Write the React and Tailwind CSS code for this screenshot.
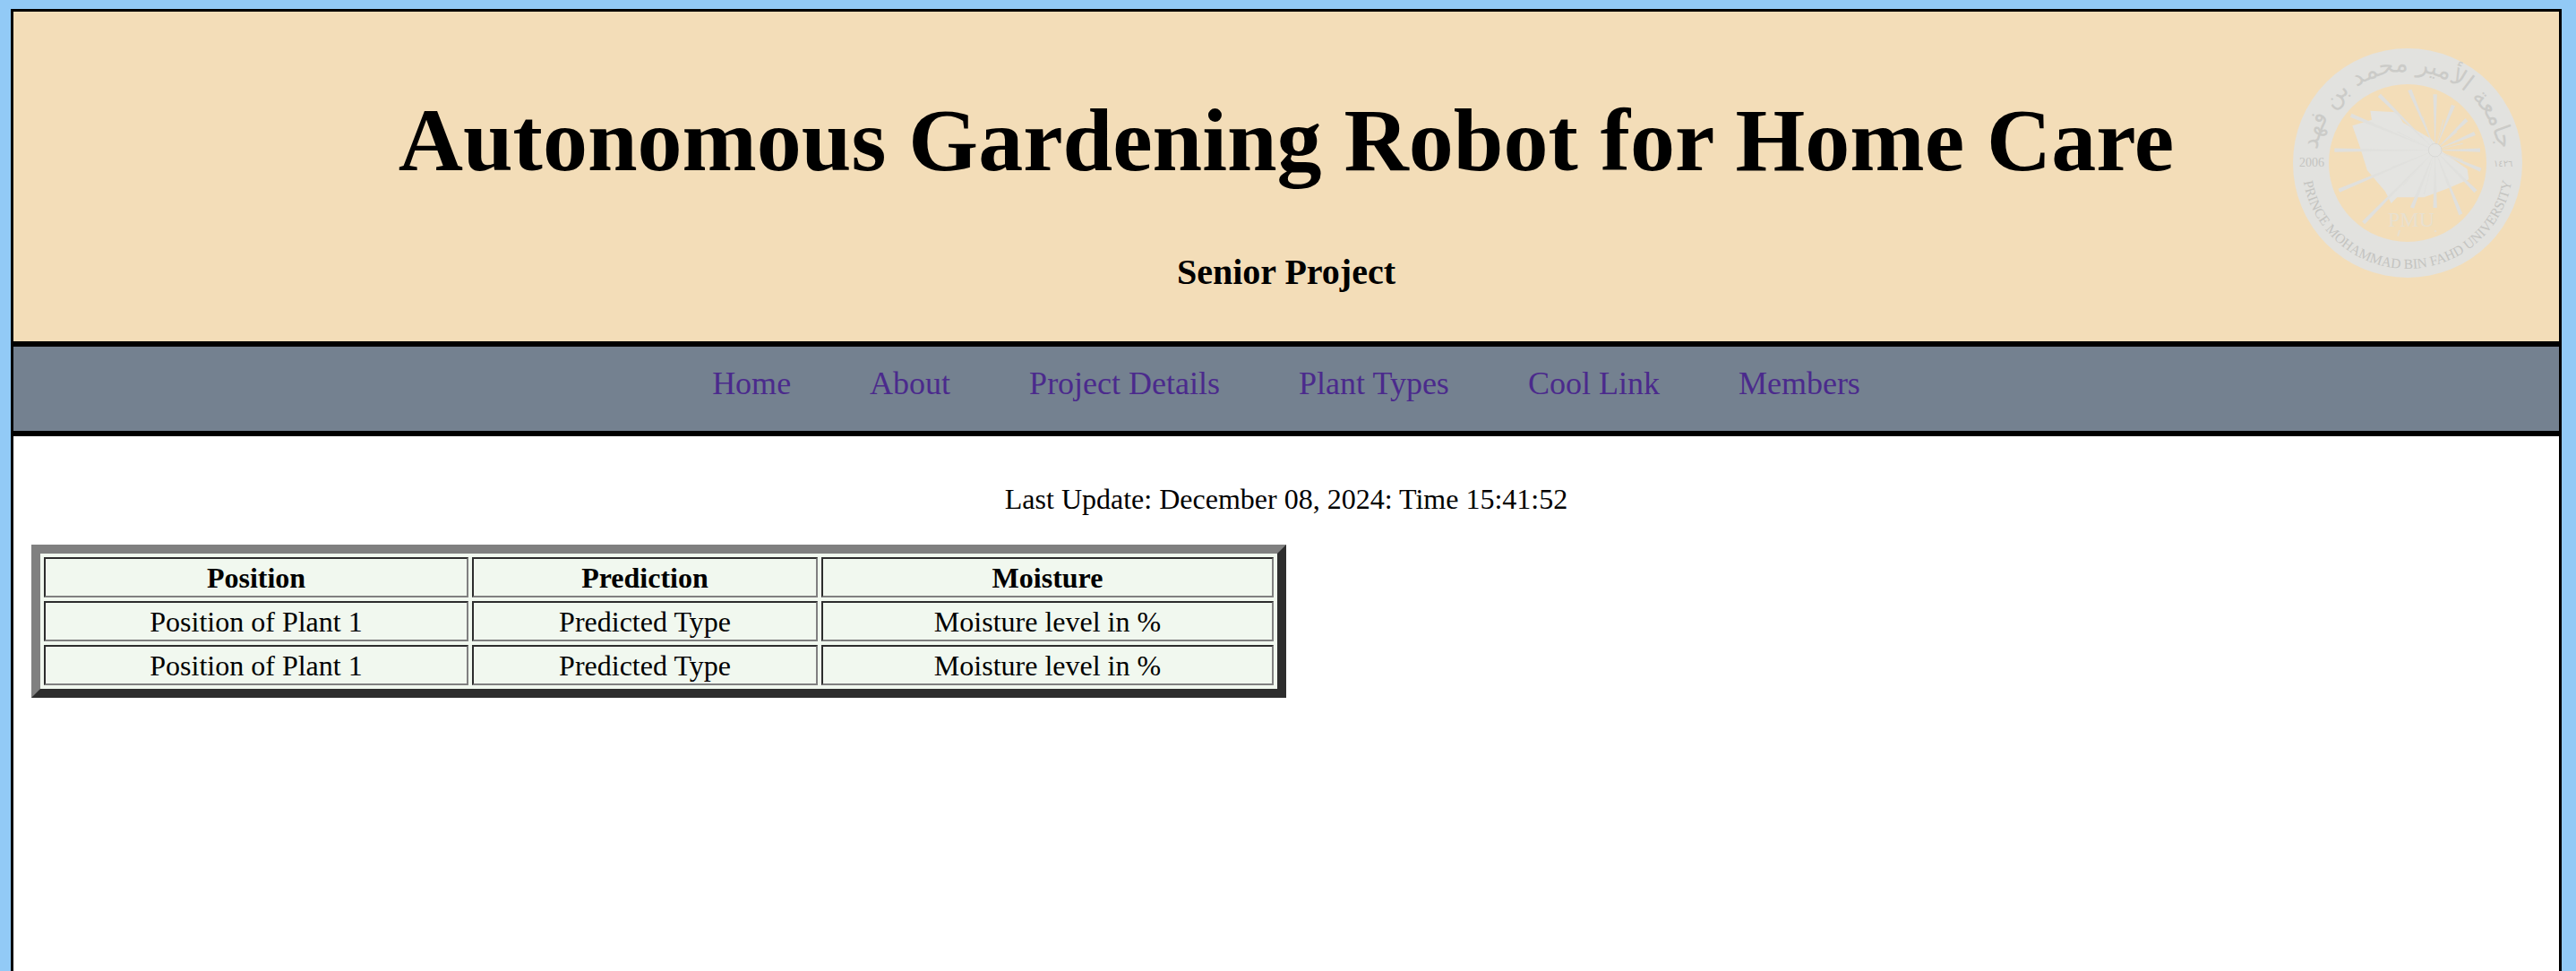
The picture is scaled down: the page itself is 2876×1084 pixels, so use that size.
const serif = "font-['Liberation_Serif','Times_New_Roman',serif]";

const SUN = [597, 412];
const RAY_ENDS = [
  [410, 228], [512, 210], [597, 225], [658, 262], [703, 310], [730, 356], [748, 412], [750, 478],
  [733, 550], [683, 627], [597, 605], [520, 605], [357, 655], [275, 547], [260, 412], [315, 295],
];
const FINE_RAYS = [
  [555, 300], [625, 310], [670, 350], [690, 390], [690, 445], [670, 490], [640, 530], [560, 560],
  [490, 530], [450, 470], [450, 412], [470, 350],
];

function taper([x, y], w) {
  const dx = x - SUN[0];
  const dy = y - SUN[1];
  const len = Math.hypot(dx, dy);
  const nx = (-dy / len) * (w / 2);
  const ny = (dx / len) * (w / 2);
  return `${SUN[0]},${SUN[1]} ${x + nx},${y + ny} ${x - nx},${y - ny}`;
}

function Logo() {
  const ring = "#e2e2df";
  const ray = "#e0e0dd";
  return (
    <svg width="260" height="260" viewBox="-130 -130 260 260" className="absolute left-[2558px] top-[52px]" aria-label="Prince Mohammad Bin Fahd University seal">
      <defs>
        <path id="topArc" d="M -101 14 A 102 102 0 1 1 101 14" />
        <path id="bottomArc" d="M -118 0 A 118 118 0 0 0 118 0" />
      </defs>
      <circle r="128" fill={ring} />
      <circle r="88" fill="#f3ddb8" />
      <g transform="scale(0.3333) translate(-505 -455)">
        <polygon points="380,280 470,285 490,320 585,375 625,420 705,475 710,510 640,540 560,570 470,570 450,590 430,550 370,480 345,400 320,330 385,310" fill="#e4e4e1" />
        {RAY_ENDS.map((p, i) => <polygon key={i} points={taper(p, 13)} fill={ray} />)}
        {FINE_RAYS.map((p, i) => <polygon key={i} points={taper(p, 3)} fill={ray} />)}
        <circle cx={SUN[0]} cy={SUN[1]} r="22" fill="#e4e4e1" stroke="#d2d2cf" strokeWidth="2" />
        <text x="517" y="668" textAnchor="middle" fontFamily="Liberation Serif, serif" fontSize="72" fill="#e8e0cf">PMU</text>
        <path d="M478 680 L472 700" stroke="#e8e0cf" strokeWidth="6" />
        <circle cx="598" cy="683" r="4" fill="#e8e0cf" />
      </g>
      <text fontFamily="DejaVu Sans, sans-serif" fontSize="27" fill="#cbcbc8">
        <textPath href="#topArc" startOffset="50%" textAnchor="middle">جامعة الأمير محمد بن فهد</textPath>
      </text>
      <text fontFamily="Liberation Serif, serif" fontSize="15.5" fill="#c4c4c1">
        <textPath href="#bottomArc" startOffset="50%" textAnchor="middle">PRINCE MOHAMMAD BIN FAHD UNIVERSITY</textPath>
      </text>
      <text x="-121" y="4" fontFamily="Liberation Serif, serif" fontSize="14" fill="#c4c4c1">2006</text>
      <text x="96" y="4" fontFamily="DejaVu Sans, sans-serif" fontSize="10" fill="#c4c4c1">١٤٢٦</text>
    </svg>
  );
}

const links = ["Home", "About", "Project Details", "Plant Types", "Cool Link", "Members"];
const cell = "border-2 border-t-[#2d2d2d] border-l-[#2d2d2d] border-r-[#808080] border-b-[#808080] h-[45px] p-0 text-center text-[32px] leading-[36px]";
const rows = [0, 1];

export default function App() {
  return (
    <div className={`min-h-[1084px] bg-[#92caf6] pt-[10px] pl-[12px] pr-[16px] ${serif} text-black`}>
      <div className="h-[1074px] border-[3px] border-b-0 border-black bg-white overflow-hidden">
        <header className="h-[374px] bg-[#f3ddb8] border-b-[6px] border-black text-center">
          <h1 className="pt-[89px] text-[100px] leading-[110px] font-bold">Autonomous Gardening Robot for Home Care</h1>
          <h2 className="mt-[69px] text-[40px] leading-[46px] font-bold">Senior Project</h2>
        </header>
        <nav className="h-[100px] bg-[#748190] border-b-[6px] border-black flex justify-center items-start gap-[88px] pt-[20px]">
          {links.map((l) => (
            <a key={l} className="text-[36px] leading-[42px] text-[#4b2a8c]">{l}</a>
          ))}
        </nav>
        <p className="mt-[52px] text-center text-[32px] leading-[36px]">Last Update: December 08, 2024: Time 15:41:52</p>
        <table className="mt-[33px] ml-[20px] w-[1401px] table-fixed border-separate border-spacing-[4px] border-[10px] border-t-[#808080] border-l-[#808080] border-r-[#2d2d2d] border-b-[#2d2d2d] bg-[#f1f8ef]">
          <colgroup>
            <col className="w-[474px]" />
            <col className="w-[386px]" />
            <col />
          </colgroup>
          <thead>
            <tr>
              <th className={`${cell} font-bold`}>Position</th>
              <th className={`${cell} font-bold`}>Prediction</th>
              <th className={`${cell} font-bold`}>Moisture</th>
            </tr>
          </thead>
          <tbody>
            {rows.map((r) => (
              <tr key={r}>
                <td className={cell}>Position of Plant 1</td>
                <td className={cell}>Predicted Type</td>
                <td className={cell}>Moisture level in %</td>
              </tr>
            ))}
          </tbody>
        </table>
      </div>
      <Logo />
    </div>
  );
}
